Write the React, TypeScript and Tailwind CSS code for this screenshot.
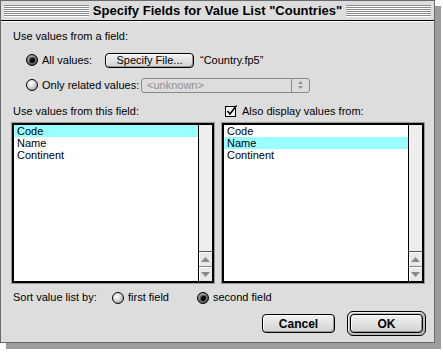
import React from 'react';

const fields = ['Code', 'Name', 'Continent'];

const Radio = ({ on }: { on?: boolean }) => (
  <span
    className={`flex h-[12px] w-[12px] shrink-0 items-center justify-center rounded-full border border-black ${
      on
        ? 'bg-[radial-gradient(circle_at_40%_35%,#c8c8c8_0%,#666_60%,#333_100%)]'
        : 'bg-[radial-gradient(circle_at_35%_30%,#ffffff_0%,#e4e4e4_35%,#8a8a8a_100%)]'
    }`}
  >
    {on && <span className="h-[6px] w-[6px] rounded-full bg-black shadow-[inset_1px_1px_0_#666]" />}
  </span>
);

const Arrow = ({ up }: { up?: boolean }) => (
  <svg width="9" height="5" viewBox="0 0 9 5">
    <path d={up ? 'M0 5 L4.5 0 L9 5 Z' : 'M0 0 L4.5 5 L9 0 Z'} fill="#8a8a8a" />
  </svg>
);

const FieldList = ({ selected }: { selected: number }) => (
  <div className="flex h-[160px] border-2 border-black bg-white shadow-[0_0_0_1px_#9a9a9a]">
    <ul className="flex-1">
      {fields.map((f, i) => (
        <li key={f} className={`h-[12px] pl-[3px] leading-[12px] ${i === selected ? 'bg-[#99ffff]' : ''}`}>
          {f}
        </li>
      ))}
    </ul>
    <div className="flex w-[14px] flex-col border-l border-black bg-[#eeeeee]">
      <div className="flex-1" />
      <div className="flex h-[15px] items-center justify-center border-t border-[#555] bg-[#e8e8e8] shadow-[inset_1px_1px_0_#fff]">
        <Arrow up />
      </div>
      <div className="flex h-[15px] items-center justify-center border-t border-[#888] bg-[#e8e8e8] shadow-[inset_1px_1px_0_#fff]">
        <Arrow />
      </div>
    </div>
  </div>
);

const btn =
  'flex h-[19px] w-[73px] items-center justify-center rounded-[4px] border border-black bg-gradient-to-b from-[#f2f2f2] to-[#d2d2d2] shadow-[inset_1px_1px_0_#fff,inset_-1px_-1px_0_#999]';

export default function App() {
  return (
    <div className="h-[355px] w-[443px] bg-white font-['Liberation_Sans',Arial,sans-serif] text-[11px] text-black">
      <div className="flex h-[343px] w-[435px] flex-col border border-[#6a6a6a] bg-[#dddddd] shadow-[6px_6px_0_#9c9c9c]">
        {/* Title bar */}
        <div className="flex h-[20px] shrink-0 items-center gap-[4px] border-b border-black px-[3px]">
          <div className="h-[12px] flex-1 bg-[repeating-linear-gradient(to_bottom,#8a8a8a_0px,#8a8a8a_1px,#ffffff_1px,#ffffff_2px)]" />
          <span className="text-[13px] font-bold leading-[14px]">Specify Fields for Value List "Countries"</span>
          <div className="h-[12px] flex-1 bg-[repeating-linear-gradient(to_bottom,#8a8a8a_0px,#8a8a8a_1px,#ffffff_1px,#ffffff_2px)]" />
        </div>

        <div className="flex flex-1 flex-col border-t border-white pl-[11px] pr-[8px]">
          <div className="ml-[1px] mt-[8px] h-[12px] leading-[12px]">Use values from a field:</div>

          <div className="mt-[10px] flex h-[16px] items-center">
            <span className="ml-[14px]">
              <Radio on />
            </span>
            <span className="ml-[4px] w-[63px]">All values:</span>
            <button className="flex h-[15px] w-[89px] items-center justify-center rounded-[4px] border border-black bg-gradient-to-b from-[#f2f2f2] to-[#d2d2d2] shadow-[inset_1px_1px_0_#fff,inset_-1px_-1px_0_#999]">
              Specify File...
            </button>
            <span className="ml-[6px]">“Country.fp5”</span>
          </div>

          <div className="mt-[9px] flex h-[16px] items-center">
            <span className="ml-[14px]">
              <Radio />
            </span>
            <span className="ml-[4px] w-[99px]">Only related values:</span>
            <div className="flex h-[15px] w-[169px] items-center rounded-[3px] border border-[#8a8a8a] text-[#8f8f8f]">
              <span className="flex-1 pl-[5px]">&lt;unknown&gt;</span>
              <span className="flex h-full w-[18px] flex-col items-center justify-center gap-[2px] border-l border-[#8a8a8a]">
                <svg width="5" height="3" viewBox="0 0 5 3">
                  <path d="M0 3 L2.5 0 L5 3 Z" fill="#8f8f8f" />
                </svg>
                <svg width="5" height="3" viewBox="0 0 5 3">
                  <path d="M0 0 L2.5 3 L5 0 Z" fill="#8f8f8f" />
                </svg>
              </span>
            </div>
          </div>

          <div className="mt-[12px] grid h-[12px] grid-cols-[202px_202px] gap-x-[8px] leading-[12px]">
            <span className="ml-[1px]">Use values from this field:</span>
            <span className="flex items-center">
              <svg className="ml-[3px]" width="13" height="12" viewBox="0 0 13 12">
                <rect x="0.5" y="1.5" width="10" height="10" fill="#f4f4f4" stroke="#000" />
                <path d="M2.5 6 L5 9 L11.5 0.5" fill="none" stroke="#000" strokeWidth="1.6" />
              </svg>
              <span className="ml-[4px]">Also display values from:</span>
            </span>
          </div>

          <div className="mt-[6px] grid grid-cols-[202px_202px] gap-x-[8px]">
            <FieldList selected={0} />
            <FieldList selected={1} />
          </div>

          <div className="mt-[8px] flex h-[13px] items-center">
            <span className="ml-[1px] w-[99px]">Sort value list by:</span>
            <Radio />
            <span className="ml-[4px] w-[69px]">first field</span>
            <Radio on />
            <span className="ml-[4px]">second field</span>
          </div>

          <div className="mt-[7px] flex items-center justify-end gap-[12px] pr-[0px]">
            <button className={`${btn} text-[12px] font-bold`}>Cancel</button>
            <div className="rounded-[6px] border border-black bg-[#bdbdbd] p-[2px] shadow-[inset_1px_1px_0_#eee]">
              <button className={`${btn} text-[12px] font-bold`}>OK</button>
            </div>
          </div>
        </div>
      </div>
    </div>
  );
}
